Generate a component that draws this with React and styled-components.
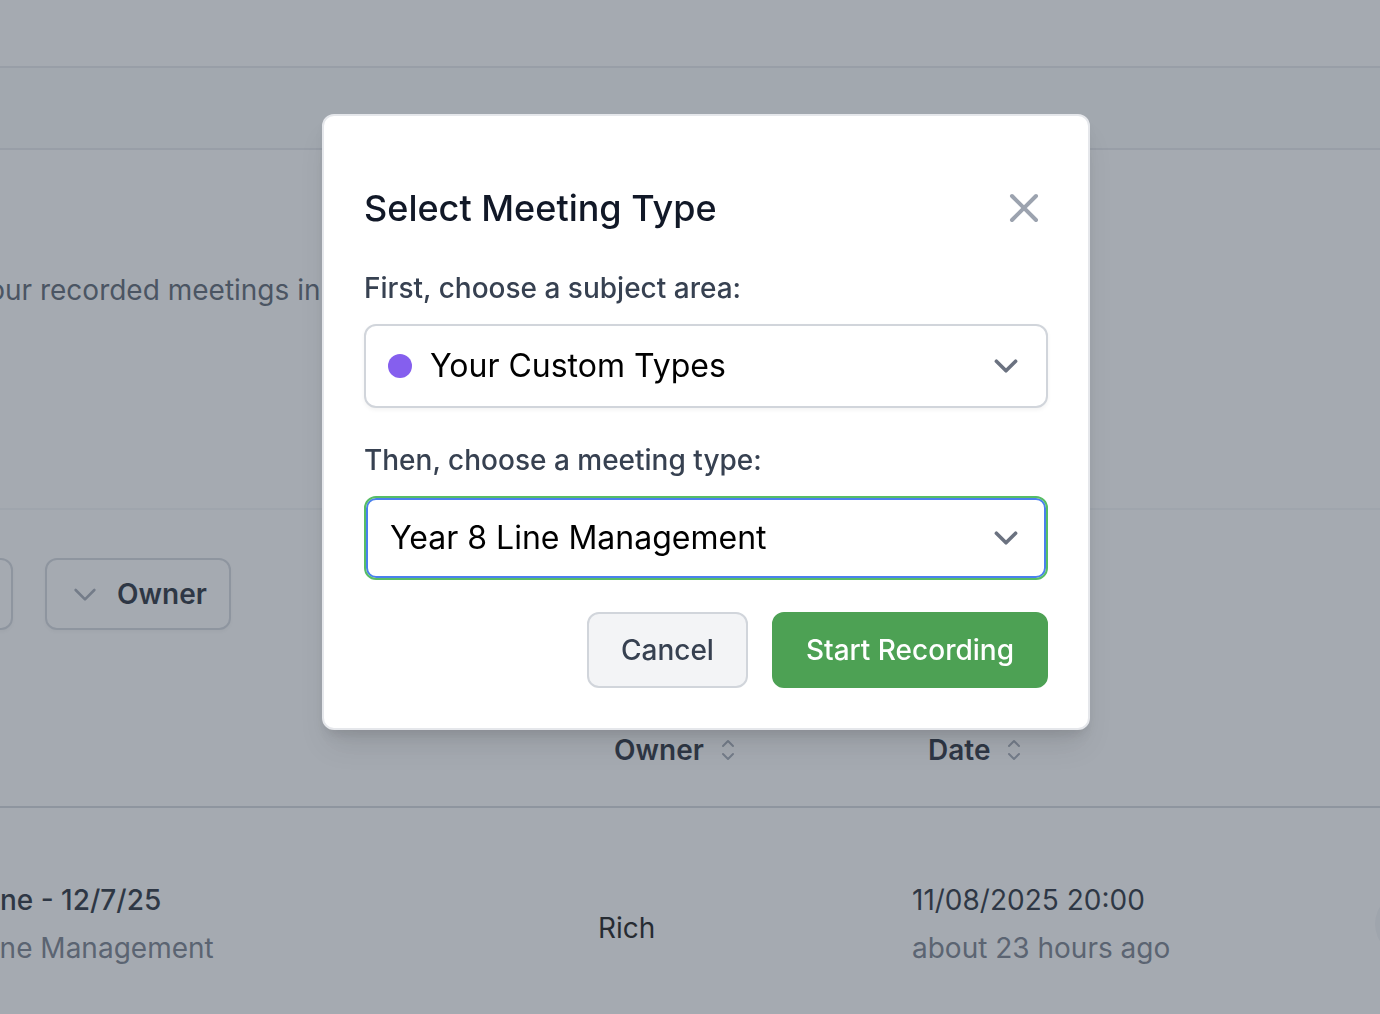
import React from "react";
import styled, { createGlobalStyle } from "styled-components";

const GlobalStyle = createGlobalStyle`
  *, *::before, *::after { box-sizing: border-box; }
  body {
    margin: 0;
    background: #ffffff;
    color: #000000;
    font-family: Inter, "Liberation Sans", sans-serif;
    font-size: 28px;
    line-height: 40px;
    font-variation-settings: "opsz" 14;
    -webkit-font-smoothing: antialiased;
  }
  button, select { font: inherit; font-variation-settings: inherit; margin: 0; cursor: pointer; }
`;

const Page = styled.div`
  height: 100vh;
  overflow: hidden;
`;

const TopBar = styled.header`
  height: 68px;
  border-bottom: 2px solid #e5e7eb;
`;

const SubBar = styled.nav`
  height: 82px;
  background: #f9fafb;
  border-bottom: 2px solid #e5e7eb;
`;

const Sheet = styled.main`
  margin: 0 -92px 0 -27px;
`;

const Intro = styled.section`
  padding: 120px 0 198px;
  border-bottom: 2px solid #f3f4f6;
  color: #4b5563;

  p { margin: 0; }
`;

const Filters = styled.div`
  display: flex;
  gap: 32px;
  padding: 48px 0 64px;
`;

const FilterButton = styled.button`
  display: flex;
  align-items: center;
  gap: 16px;
  height: 72px;
  min-width: 40px;
  padding: 0 22px;
  border: 2px solid #d1d5db;
  border-radius: 12px;
  background: #ffffff;
  box-shadow: 0 2px 4px rgba(0, 0, 0, 0.05);
  color: #111827;
  font-weight: 600;
`;

const Chip = styled(FilterButton)`
  padding: 0 16px;
`;

const Table = styled.table`
  width: 100%;
  table-layout: fixed;
  border-collapse: separate;
  border-spacing: 0;
  text-align: left;
`;

const HeadCell = styled.th`
  width: ${(p) => p.$width || "auto"};
  padding: 36px 32px;
  border-bottom: 2px solid #d1d5db;
`;

const SortButton = styled.button`
  display: flex;
  align-items: center;
  gap: 8px;
  padding: 0 16px;
  border: 0;
  background: none;
  color: #111827;
  font-weight: 600;
`;

const Cell = styled.td`
  padding: ${(p) => (p.$first ? "72px 4px" : "72px 32px")};
  vertical-align: middle;
`;

const Primary = styled.div`
  color: #111827;
  font-weight: ${(p) => (p.$strong ? 500 : 400)};
`;

const Secondary = styled.div`
  margin-top: 8px;
  color: #6b7280;
`;

const OwnerName = styled.div`
  padding-top: 8px;
`;

const RoundButton = styled.button`
  display: block;
  width: 64px;
  height: 64px;
  padding: 0;
  border: 0;
  border-radius: 50%;
  background: #f3f4f6;
`;

const Overlay = styled.div`
  position: fixed;
  inset: 0;
  display: flex;
  justify-content: center;
  align-items: flex-start;
  padding: 114px 0 0 32px;
  background: rgba(75, 85, 99, 0.5);
`;

const Dialog = styled.section`
  width: 768px;
  max-width: 100%;
  padding: 64px 40px 40px;
  border: 2px solid #e5e7eb;
  border-radius: 12px;
  background: #ffffff;
  box-shadow: 0 20px 30px -6px rgba(0, 0, 0, 0.1), 0 8px 12px -4px rgba(0, 0, 0, 0.1);
`;

const DialogHeader = styled.div`
  display: flex;
  justify-content: space-between;
  align-items: center;
  margin-bottom: 32px;
`;

const Title = styled.h2`
  margin: 0;
  color: #111827;
  font-size: 36px;
  line-height: 56px;
  font-weight: 500;
`;

const CloseButton = styled.button`
  display: flex;
  padding: 0;
  border: 0;
  background: none;
  color: #9ca3af;
`;

const Field = styled.div`
  margin-bottom: 32px;
`;

const Label = styled.label`
  display: block;
  margin-bottom: 16px;
  color: #374151;
  font-weight: 500;
`;

const SelectBox = styled.div`
  position: relative;
  display: flex;
`;

const Select = styled.select`
  appearance: none;
  width: 100%;
  height: 84px;
  padding: 16px 80px 16px ${(p) => (p.$dotted ? 64 : 24)}px;
  border: 2px solid ${(p) => (p.$active ? "#57bd66" : "#d1d5db")};
  border-radius: 12px;
  outline: none;
  background: #ffffff;
  box-shadow: ${(p) => (p.$active ? "inset 0 0 0 2px #4a80ee" : "0 2px 4px rgba(0, 0, 0, 0.05)")};
  color: #000000;
  font-size: 32px;
  line-height: 48px;
`;

const Dot = styled.span`
  position: absolute;
  left: 24px;
  top: 30px;
  width: 24px;
  height: 24px;
  border-radius: 50%;
  background: #855fee;
  pointer-events: none;
`;

const SelectArrow = styled.svg`
  position: absolute;
  right: 18px;
  top: 18px;
  color: #6b7280;
  pointer-events: none;
`;

const Actions = styled.div`
  display: flex;
  justify-content: flex-end;
  gap: 24px;
`;

const Button = styled.button`
  padding: 16px 32px;
  border: 2px solid ${(p) => (p.$primary ? "#4da154" : "#d1d5db")};
  border-radius: 12px;
  background: ${(p) => (p.$primary ? "#4da154" : "#f3f4f6")};
  color: ${(p) => (p.$primary ? "#ffffff" : "#374151")};
  font-weight: 500;
`;

const Stroke = ({ size, width = 2, d, color = "currentColor" }) => (
  <svg width={size} height={size} viewBox="0 0 24 24" fill="none" stroke={color}
    strokeWidth={width} strokeLinecap="round" strokeLinejoin="round" aria-hidden="true">
    <path d={d} />
  </svg>
);

const SortHeader = ({ children, width }) => (
  <HeadCell $width={width} scope="col">
    <SortButton type="button">
      {children}
      <Stroke size={32} width={1.5} color="#9ca3af"
        d="M8.25 15L12 18.75 15.75 15m-7.5-6L12 5.25 15.75 9" />
    </SortButton>
  </HeadCell>
);

const SelectField = ({ id, label, value, dotted, active }) => (
  <Field>
    <Label htmlFor={id}>{label}</Label>
    <SelectBox>
      <Select id={id} defaultValue={value} $dotted={dotted} $active={active}>
        <option>{value}</option>
      </Select>
      {dotted && <Dot />}
      <SelectArrow width="48" height="48" viewBox="0 0 20 20" fill="none" aria-hidden="true">
        <path d="M6 8l4 4 4-4" stroke="currentColor" strokeWidth="1.5"
          strokeLinecap="round" strokeLinejoin="round" />
      </SelectArrow>
    </SelectBox>
  </Field>
);

export default function App() {
  return (
    <>
      <GlobalStyle />
      <Page>
        <TopBar />
        <SubBar />
        <Sheet>
          <Intro>
            <p>your recorded meetings in</p>
          </Intro>
          <Filters>
            <Chip type="button" aria-label="Filter" />
            <FilterButton type="button">
              <Stroke size={32} d="M19 9l-7 7-7-7" color="#9ca3af" />
              Owner
            </FilterButton>
          </Filters>
          <Table>
            <thead>
              <tr>
                <HeadCell scope="col" aria-label="Meeting" />
                <SortHeader width="314px">Owner</SortHeader>
                <SortHeader width="463px">Date</SortHeader>
                <HeadCell $width="129px" scope="col" aria-label="Actions" />
              </tr>
            </thead>
            <tbody>
              <tr>
                <Cell $first>
                  <Primary $strong>Line - 12/7/25</Primary>
                  <Secondary>Line Management</Secondary>
                </Cell>
                <Cell>
                  <OwnerName>Rich</OwnerName>
                </Cell>
                <Cell>
                  <Primary>11/08/2025 20:00</Primary>
                  <Secondary>about 23 hours ago</Secondary>
                </Cell>
                <Cell>
                  <RoundButton type="button" aria-label="Open meeting" />
                </Cell>
              </tr>
            </tbody>
          </Table>
        </Sheet>
      </Page>
      <Overlay>
        <Dialog role="dialog" aria-modal="true" aria-labelledby="dialog-title">
          <DialogHeader>
            <Title id="dialog-title">Select Meeting Type</Title>
            <CloseButton type="button" aria-label="Close">
              <Stroke size={48} d="M6 18L18 6M6 6l12 12" />
            </CloseButton>
          </DialogHeader>
          <SelectField id="subject" label="First, choose a subject area:" value="Your Custom Types" dotted />
          <SelectField id="meeting" label="Then, choose a meeting type:" value="Year 8 Line Management" active />
          <Actions>
            <Button type="button">Cancel</Button>
            <Button type="button" $primary>Start Recording</Button>
          </Actions>
        </Dialog>
      </Overlay>
    </>
  );
}
